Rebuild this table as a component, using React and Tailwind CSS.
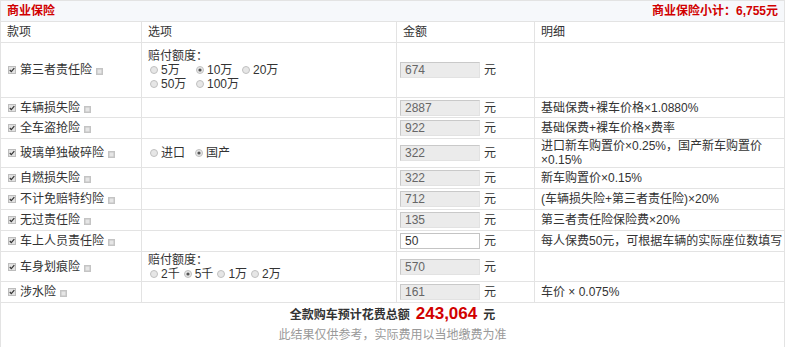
import React from "react"

const rows = [
    { name: "第三者责任险", h: "h-[55px]", opt: "third", val: "674" },
    { name: "车辆损失险", h: "h-[20px]", val: "2887", detail: "基础保费+裸车价格×1.0880%" },
    { name: "全车盗抢险", h: "h-[21px]", val: "922", detail: "基础保费+裸车价格×费率" },
    { name: "玻璃单独破碎险", h: "h-[29px]", opt: "glass", val: "322", detail: ["进口新车购置价×0.25%，国产新车购置价", "×0.15%"] },
    { name: "自燃损失险", h: "h-[21px]", val: "322", detail: "新车购置价×0.15%" },
    { name: "不计免赔特约险", h: "h-[21px]", val: "712", detail: "(车辆损失险+第三者责任险)×20%" },
    { name: "无过责任险", h: "h-[21px]", val: "135", detail: "第三者责任险保险费×20%" },
    { name: "车上人员责任险", h: "h-[21px]", val: "50", editable: true, detail: "每人保费50元，可根据车辆的实际座位数填写" },
    { name: "车身划痕险", h: "h-[30px]", opt: "scratch", val: "570" },
    { name: "涉水险", h: "h-[21px]", val: "161", detail: "车价 × 0.075%" },
]

function Check() {
    return (
        <svg width="8" height="8" viewBox="0 0 8 8" className="shrink-0">
            <rect x="0.5" y="0.5" width="7" height="7" fill="#e2e2e2" stroke="#bcbcbc" />
            <path d="M1.8 4 L3.3 5.6 L6.3 2.2" fill="none" stroke="#333" strokeWidth="1.2" />
        </svg>
    )
}

function Help() {
    return (
        <svg width="7" height="7" viewBox="0 0 7 7" className="shrink-0 ml-[4px] mt-[3px]">
            <rect x="0" y="0" width="7" height="7" fill="#c4c4c4" />
            <rect x="1.5" y="1.5" width="4" height="4" fill="#e6e6e6" />
        </svg>
    )
}

function Radio({ on }) {
    return (
        <svg width="8" height="8" viewBox="0 0 8 8" className="shrink-0 mr-[3px]">
            <circle cx="4" cy="4" r="3.5" fill="#e6e6e6" stroke="#c0c0c0" />
            {on && <circle cx="4" cy="4" r="1.6" fill="#555" />}
        </svg>
    )
}

function Opt({ label, on, w }) {
    return (
        <span className={`inline-flex items-center shrink-0 whitespace-nowrap ${w}`}>
            <Radio on={on} />
            {label}
        </span>
    )
}

function Options({ type }) {
    if (type === "third")
        return (
            <div className="leading-[14px]">
                <div>赔付额度：</div>
                <div className="flex pl-[2px]">
                    <Opt label="5万" w="w-[46px]" />
                    <Opt label="10万" on w="w-[46px]" />
                    <Opt label="20万" />
                </div>
                <div className="flex pl-[2px]">
                    <Opt label="50万" w="w-[46px]" />
                    <Opt label="100万" />
                </div>
            </div>
        )
    if (type === "glass")
        return (
            <div className="flex pl-[2px]">
                <Opt label="进口" w="w-[45px]" />
                <Opt label="国产" on />
            </div>
        )
    if (type === "scratch")
        return (
            <div className="leading-[14px]">
                <div>赔付额度：</div>
                <div className="flex gap-[4px] pl-[2px]">
                    <Opt label="2千" />
                    <Opt label="5千" on />
                    <Opt label="1万" />
                    <Opt label="2万" />
                </div>
            </div>
        )
    return null
}

export default function App() {
    return (
        <div className="w-[785px] h-[347px] overflow-hidden bg-white text-[12px] text-[#333] font-['Liberation_Sans','Noto_Sans_CJK_SC',sans-serif]">
            <div className="border-l border-r border-t border-[#e3e3e3]">
                <div className="h-[21px] flex items-center justify-between px-[6px] bg-[#f6f8fb] border-b border-[#e3e3e3] text-[#d10000] font-bold">
                    <span>商业保险</span>
                    <span>商业保险小计：6,755元</span>
                </div>

                <div className="grid grid-cols-[141px_255px_138px_1fr] h-[21px] border-b border-[#e3e3e3]">
                    <div className="flex items-center pl-[6px] border-r border-[#e3e3e3]">款项</div>
                    <div className="flex items-center pl-[6px] border-r border-[#e3e3e3]">选项</div>
                    <div className="flex items-center pl-[6px] border-r border-[#e3e3e3]">金额</div>
                    <div className="flex items-center pl-[6px]">明细</div>
                </div>

                {rows.map((r, i) => (
                    <div key={i} className={`grid grid-cols-[141px_255px_138px_1fr] border-b border-[#e3e3e3] ${r.h}`}>
                        <div className="flex items-center pl-[7px] border-r border-[#e3e3e3]">
                            <Check />
                            <span className="ml-[4px]">{r.name}</span>
                            <Help />
                        </div>
                        <div className="flex items-center pl-[6px] border-r border-[#e3e3e3]">
                            <Options type={r.opt} />
                        </div>
                        <div className="flex items-center pl-[3px] border-r border-[#e3e3e3]">
                            <div
                                className={`w-[80px] h-[16px] flex items-center pl-[4px] border ${
                                    r.editable
                                        ? "bg-white border-[#c4c4c4] text-[#333]"
                                        : "bg-[#ebebeb] border-[#e2e2e2] border-t-[#c9c9c9] border-l-[#c9c9c9] text-[#666]"
                                }`}
                            >
                                {r.val}
                            </div>
                            <span className="ml-[4px]">元</span>
                        </div>
                        <div className="flex items-center pl-[6px] whitespace-nowrap leading-[14px]">
                            {Array.isArray(r.detail) ? (
                                <div>
                                    <div>{r.detail[0]}</div>
                                    <div>{r.detail[1]}</div>
                                </div>
                            ) : (
                                r.detail
                            )}
                        </div>
                    </div>
                ))}

                <div className="h-[45px] flex flex-col items-center">
                    <div className="pt-[1px] leading-[20px] flex items-baseline font-bold">
                        <span>全款购车预计花费总额</span>
                        <span className="mx-[6px] text-[17px] text-[#d10000]">243,064</span>
                        <span>元</span>
                    </div>
                    <div className="leading-[20px] text-[#999]">此结果仅供参考，实际费用以当地缴费为准</div>
                </div>
            </div>
        </div>
    )
}
